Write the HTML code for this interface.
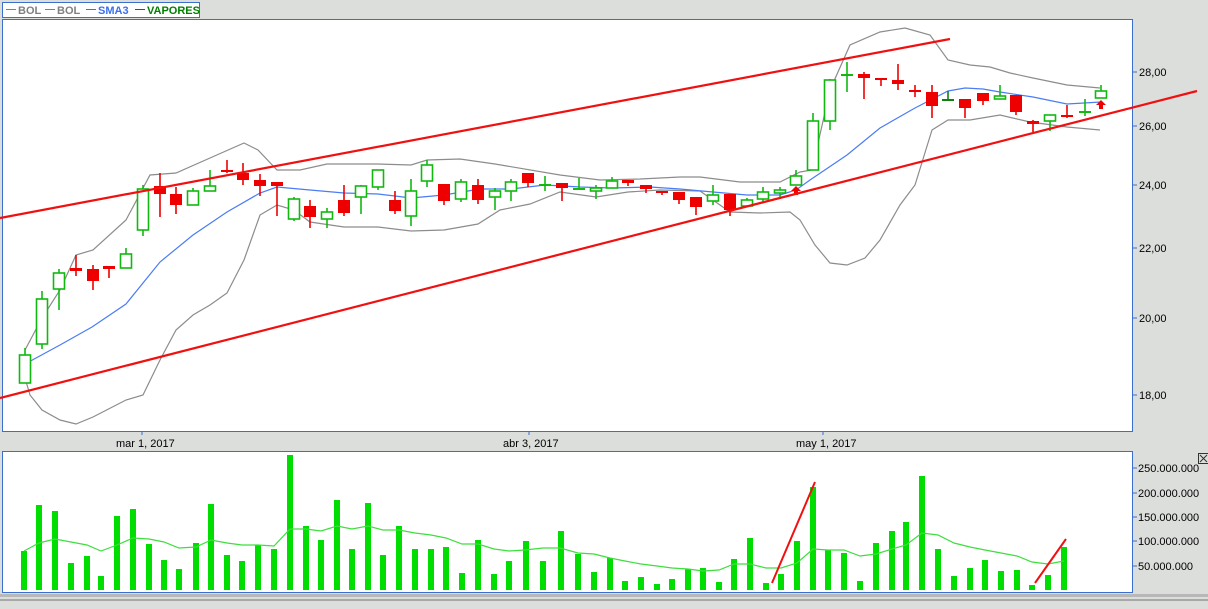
<!DOCTYPE html>
<html><head><meta charset="utf-8"><style>
html,body{margin:0;padding:0;background:#dcdedc;}
body{width:1208px;height:604px;overflow:hidden;font-family:"Liberation Sans",sans-serif;}
</style></head><body>
<svg width="1208" height="604" viewBox="0 0 1208 604" xmlns="http://www.w3.org/2000/svg" font-family="Liberation Sans, sans-serif">
<rect x="0" y="0" width="1208" height="604" fill="#dcdedc"/>
<rect x="2.5" y="2.5" width="197" height="15" fill="#fff" stroke="#3a6fcf" stroke-width="1"/>
<g font-size="11" font-weight="bold">
<line x1="6" y1="9.5" x2="16" y2="9.5" stroke="#808080"/><text x="18" y="14" fill="#808080">BOL</text>
<line x1="45" y1="9.5" x2="55" y2="9.5" stroke="#808080"/><text x="57" y="14" fill="#808080">BOL</text>
<line x1="86" y1="9.5" x2="96" y2="9.5" stroke="#3a6fef"/><text x="98" y="14" fill="#3a6fef">SMA3</text>
<line x1="135" y1="9.5" x2="145" y2="9.5" stroke="#008000"/><text x="147" y="14" fill="#008000">VAPORES</text>
</g>
<rect x="2.5" y="19.5" width="1130" height="412" fill="#fff" stroke="#3a6fcf"/>
<g stroke="#3a6fcf"><line x1="1133" y1="72" x2="1137" y2="72"/><line x1="1133" y1="126" x2="1137" y2="126"/><line x1="1133" y1="185" x2="1137" y2="185"/><line x1="1133" y1="248" x2="1137" y2="248"/><line x1="1133" y1="318" x2="1137" y2="318"/><line x1="1133" y1="395" x2="1137" y2="395"/>
<line x1="142" y1="432" x2="142" y2="435"/><line x1="529" y1="432" x2="529" y2="435"/><line x1="823" y1="432" x2="823" y2="435"/></g>
<g font-size="11" fill="#000"><text x="1139" y="76">28,00</text><text x="1139" y="130">26,00</text><text x="1139" y="189">24,00</text><text x="1139" y="252">22,00</text><text x="1139" y="322">20,00</text><text x="1139" y="399">18,00</text>
<text x="116" y="447">mar 1, 2017</text><text x="503" y="447">abr 3, 2017</text><text x="796" y="447">may 1, 2017</text></g>
<svg x="3" y="20" width="1129" height="411" viewBox="3 20 1129 411" overflow="hidden">
<polyline fill="none" stroke="#8c8c8c" stroke-width="1.2" points="25,350 42,318 60,290 76,255 93,250 126,220 150,175 176,173 210,158 244,143 258,150 277,170 300,170 327,164 378,164 411,165 427,160 460,159 495,164 560,175 600,180 640,179 680,177 700,177 740,182 780,182 800,172 812,170 830,90 850,45 880,32 905,28 930,35 948,60 970,65 990,67 1010,73 1033,78 1067,85 1100,88"/>
<polyline fill="none" stroke="#8c8c8c" stroke-width="1.2" points="25,378 30,395 42,410 60,420 76,424 93,417 126,400 143,395 160,360 176,330 193,315 210,305 227,293 244,260 260,215 277,205 294,210 310,222 344,227 378,227 411,231 444,230 478,224 500,210 530,204 560,192 596,197 628,192 660,190 700,191 730,212 760,213 790,212 800,220 815,245 830,263 847,265 865,258 880,240 900,205 915,185 932,130 948,120 970,120 1000,115 1030,122 1067,127 1100,130"/>
<polyline fill="none" stroke="#4a7cf5" stroke-width="1.2" points="25,364 60,345 92,327 126,304 160,262 193,235 227,212 260,193 277,187 310,190 344,193 378,194 395,196 411,198 444,195 480,189 511,189 545,185 580,187 612,188 650,187 680,189 713,192 747,195 780,195 796,190 810,180 847,155 880,128 915,108 948,91 965,88 983,89 1000,92 1033,97 1067,104 1101,102"/>
<g id="c"></g>
</svg>
<line x1="0" y1="218" x2="950" y2="39" stroke="#f01010" stroke-width="2.2"/>
<line x1="0" y1="398" x2="1197" y2="91" stroke="#f01010" stroke-width="2.2"/>
<rect x="2.5" y="451.5" width="1130" height="141" fill="#fff" stroke="#3a6fcf"/>
<g stroke="#3a6fcf"><line x1="1133" y1="468" x2="1137" y2="468"/><line x1="1133" y1="493" x2="1137" y2="493"/><line x1="1133" y1="517" x2="1137" y2="517"/><line x1="1133" y1="541" x2="1137" y2="541"/><line x1="1133" y1="566" x2="1137" y2="566"/></g>
<g font-size="11" fill="#000"><text x="1138" y="472">250.000.000</text><text x="1138" y="497">200.000.000</text><text x="1138" y="521">150.000.000</text><text x="1138" y="545">100.000.000</text><text x="1138" y="570">50.000.000</text></g>
<rect x="1198.5" y="453.5" width="10" height="10" fill="#dcdedc" stroke="#333"/><path d="M1200 455 L1207 462 M1207 455 L1200 462" stroke="#333"/>
<g id="vol"></g>
<polyline fill="none" stroke="#3ede3e" stroke-width="1.2" points="24,551 39,543 55,539 71,542 87,545 101,551 117,545 133,538 149,539 164,542 179,548 196,547 211,540 227,543 242,545 258,545 274,546 290,529 306,529 321,531 337,526 352,529 368,526 383,530 399,530 415,533 431,535 446,538 462,544 478,544 494,549 509,551 525,550 543,548 560,548 578,553 594,554 610,558 625,561 641,564 657,566 672,568 688,569 703,571 719,570 734,564 750,564 766,568 781,568 797,563 813,549 828,550 844,550 860,556 876,554 892,549 906,545 922,533 938,535 954,543 970,547 985,550 1001,553 1017,556 1032,562 1048,564 1064,561"/>
<line x1="772" y1="583" x2="815" y2="482" stroke="#f01010" stroke-width="2"/>
<line x1="1035" y1="583" x2="1066" y2="539" stroke="#f01010" stroke-width="2"/>
<rect x="0" y="594" width="1208" height="3" fill="#b8b8b8"/><rect x="0" y="599" width="1208" height="2" fill="#a8a8a8"/>
</svg>
<script>
var C=[[25,355,383,348,383,'g'],[42,299,344,291,349,'g'],[59,273,289,269,310,'g'],[76,268,271,255,276,'r'],[93,269,281,265,290,'r'],[109,266,269,266,278,'r'],[126,254,268,248,268,'g'],[143,189,230,185,236,'g'],[160,186,194,173,217,'r'],[176,194,205,187,214,'r'],[193,191,205,188,205,'g'],[210,186,191,170,191,'g'],[227,170,172,160,173,'r'],[243,173,180,163,185,'r'],[260,180,186,174,196,'r'],[277,182,186,182,216,'r'],[294,199,219,197,221,'g'],[310,206,217,200,228,'r'],[327,212,219,208,228,'g'],[344,200,213,185,216,'r'],[361,186,197,185,214,'g'],[378,170,187,170,190,'g'],[395,200,211,191,214,'r'],[411,191,216,179,226,'g'],[427,165,181,160,187,'g'],[444,184,201,184,205,'r'],[461,182,199,179,202,'g'],[478,185,200,179,204,'r'],[495,191,197,188,210,'g'],[511,182,191,179,201,'g'],[528,173,183,173,187,'r'],[545,184,185,176,191,'G'],[562,183,188,183,201,'r'],[579,188,189,178,188,'G'],[596,188,191,185,199,'g'],[612,181,188,177,188,'g'],[628,180,183,180,186,'r'],[646,185,189,185,193,'r'],[662,191,193,191,195,'r'],[679,192,200,192,204,'r'],[696,197,207,197,215,'r'],[713,195,201,185,205,'g'],[730,194,210,194,216,'r'],[747,200,206,198,206,'g'],[763,192,199,187,202,'g'],[780,190,193,187,199,'g'],[796,176,185,170,185,'g'],[813,121,170,113,170,'g'],[830,80,121,79,130,'g'],[847,74,75,62,92,'G'],[864,74,78,72,99,'r'],[881,78,80,78,86,'r'],[898,80,84,64,90,'r'],[915,90,92,85,97,'r'],[932,92,106,85,118,'r'],[948,99,100,91,100,'D'],[965,99,108,99,118,'r'],[983,93,101,93,105,'r'],[1000,96,99,85,99,'g'],[1016,95,112,95,115,'r'],[1033,121,124,120,132,'r'],[1050,115,121,115,131,'g'],[1067,115,117,105,118,'r'],[1085,111,112,99,116,'G'],[1101,91,98,85,98,'g']];
var s='';C.forEach(function(c){var x=c[0],t=c[1],b=c[2],h=c[3],l=c[4],k=c[5];
var col=k=='r'?'#ee0000':(k=='D'?'#108010':'#10b810');
s+='<line x1="'+x+'" y1="'+h+'" x2="'+x+'" y2="'+l+'" stroke="'+col+'" stroke-width="1.6"/>';
if(k=='r'){s+='<rect x="'+(x-6)+'" y="'+t+'" width="12" height="'+Math.max(2,b-t)+'" fill="'+col+'"/>';}
else if(k=='G'||k=='D'){s+='<rect x="'+(x-6)+'" y="'+t+'" width="12" height="2" fill="'+col+'"/>';}
else{s+='<rect x="'+(x-5.5)+'" y="'+t+'" width="11" height="'+(b-t)+'" fill="#fff" stroke="'+col+'" stroke-width="1.6"/>';}});
s+='<path d="M796 186 L801 191 L798 191 L798 195 L794 195 L794 191 L791 191 Z" fill="#ee0000"/>';
s+='<path d="M1101 100 L1106 105 L1103 105 L1103 109 L1099 109 L1099 105 L1096 105 Z" fill="#ee0000"/>';
document.getElementById('c').innerHTML=s;
var V=[[24,551],[39,505],[55,511],[71,563],[87,556],[101,576],[117,516],[133,509],[149,544],[164,560],[179,569],[196,543],[211,504],[227,555],[242,561],[258,545],[274,549],[290,455],[306,526],[321,540],[337,500],[352,549],[368,503],[383,555],[399,526],[415,549],[431,549],[446,547],[462,573],[478,540],[494,574],[509,561],[526,541],[543,561],[561,531],[578,554],[594,572],[610,558],[625,581],[641,577],[657,584],[672,579],[688,569],[703,568],[719,582],[734,559],[750,538],[766,583],[781,574],[797,541],[813,487],[828,550],[844,553],[860,581],[876,543],[892,531],[906,522],[922,476],[938,549],[954,576],[970,568],[985,560],[1001,571],[1017,570],[1032,585],[1048,575],[1064,547]];
var v='';V.forEach(function(p){v+='<rect x="'+(p[0]-3)+'" y="'+p[1]+'" width="6" height="'+(590-p[1])+'" fill="#00dd00"/>';});
document.getElementById('vol').innerHTML=v;
</script>
</body></html>
